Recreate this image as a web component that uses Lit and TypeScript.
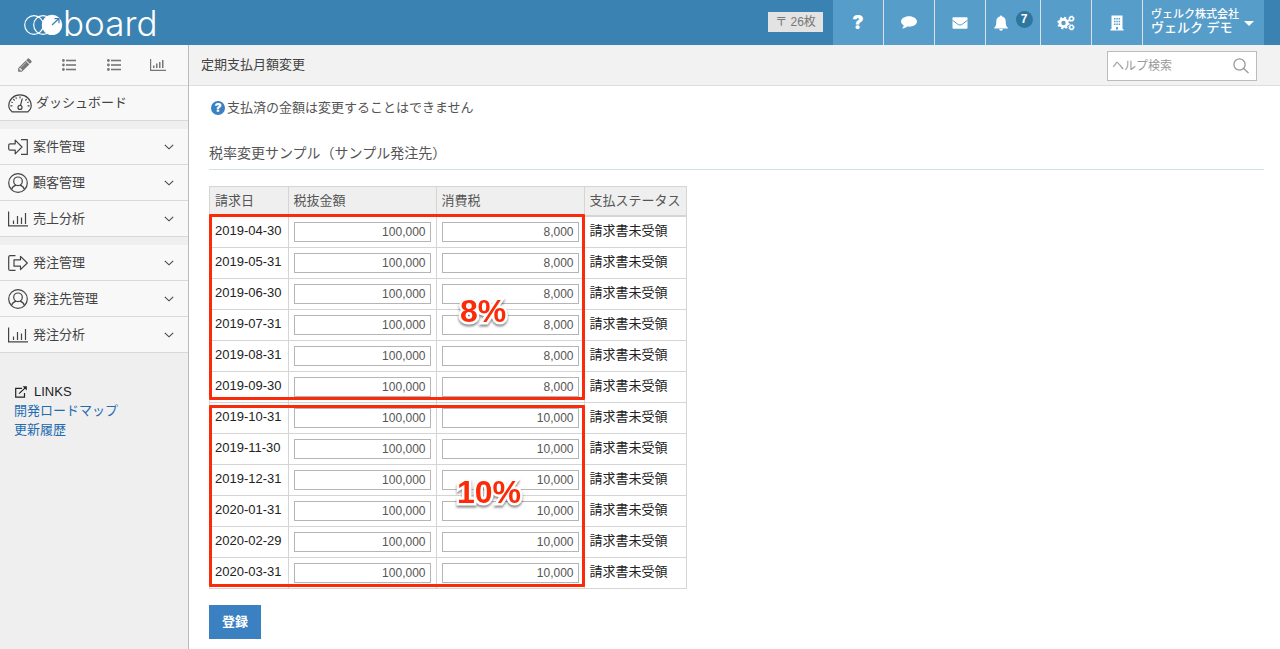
import { LitElement, html, css, svg } from "lit";
import { customElement, property, state } from "lit/decorators.js";

const pencil = svg`<svg viewBox="0 0 1792 1792" width="16" height="16" fill="currentColor" aria-hidden="true"><path d="M491 1536l91-91-235-235-91 91v107h128v128h107zM1014 608q0-22-22-22-10 0-17 7l-542 542q-7 7-7 17 0 22 22 22 10 0 17-7l542-542q7-7 7-17zM960 416l416 416-832 832h-416v-416zM1643 512q0 53-37 90l-166 166-416-416 166-165q36-38 90-38 53 0 91 38l235 234q37 39 37 91z"/></svg>`;

const list = () => svg`<svg viewBox="0 0 14 12" width="14" height="12" fill="currentColor" aria-hidden="true">
  <circle cx="1.4" cy="1.5" r="1.4"/><circle cx="1.4" cy="6" r="1.4"/><circle cx="1.4" cy="10.5" r="1.4"/>
  <rect x="4" y="0.7" width="10" height="1.6"/><rect x="4" y="5.2" width="10" height="1.6"/><rect x="4" y="9.7" width="10" height="1.6"/></svg>`;

const barSmall = svg`<svg viewBox="0 0 16 12" width="16" height="12" fill="currentColor" aria-hidden="true">
  <path d="M0 0h1.2v10.8H16V12H0zM3 6.5h1.5V9H3zM6 4.5h1.5V9H6zM9 3h1.5v6H9zM12 1h1.5v8H12z"/></svg>`;

const gauge = svg`<svg viewBox="0 0 24 19" width="24" height="19" fill="none" stroke="currentColor" stroke-width="1.2" stroke-linecap="round" aria-hidden="true">
  <path d="M4.2 17.9C2 16.3 .8 14 .8 11.6 .8 5.6 5.8 .9 12 .9s11.2 4.7 11.2 10.7c0 2.400-1.200 4.700-3.400 6.300z"/>
  <circle cx="12" cy="13.4" r="2"/><path d="M12.5 11.400l1.700-6.600"/>
  <path d="M12 2.800v1M5.600 5.400l.7.700M18.400 5.400l-.7.700M2.800 11.800h1.200M20 11.800h1.200M8 3.800l.3.500M3.800 8.300l.5.200M20.200 8.300l-.5.200"/></svg>`;

const arrowIn = svg`<svg viewBox="0 0 20 18" width="20" height="18" fill="none" stroke="currentColor" stroke-width="1.2" stroke-linejoin="round" aria-hidden="true">
  <path d="M2.200 5.800h5V2.200L14 9l-6.800 6.800v-3.600h-5Q.7 12.200 .7 10.700V7.300Q.7 5.800 2.200 5.800z"/><path d="M13 1.600h6.300v14.800H13"/></svg>`;

const arrowOut = svg`<svg viewBox="0 0 20 18" width="20" height="18" fill="none" stroke="currentColor" stroke-width="1.2" stroke-linejoin="round" aria-hidden="true">
  <path d="M6 5.800h6.500V2.400L19.300 9l-6.800 6.600v-3.400H6z"/><path d="M7.500 1.600H2.200Q.7 1.600 .7 3.100v11.800q0 1.500 1.500 1.500h5.300"/></svg>`;

const person = () => svg`<svg viewBox="0 0 20 20" width="20" height="20" fill="none" stroke="currentColor" stroke-width="1.2" aria-hidden="true">
  <circle cx="10" cy="10" r="9.3"/><circle cx="10" cy="8.300" r="4.300"/><path d="M3.600 16.400c.6-2.200 2.200-3.600 4.400-4.200M16.400 16.400c-.6-2.200-2.200-3.600-4.400-4.200"/></svg>`;

const bars = () => svg`<svg viewBox="0 0 20 16" width="20" height="16" fill="none" stroke="currentColor" stroke-width="1.2" aria-hidden="true">
  <path d="M.6 .5v14.400H20M5.500 13V9.500M9.500 13V5M13.500 13V6.500M17.500 13V2"/></svg>`;

const chevron = () => svg`<svg class="chevron" viewBox="0 0 10 6" width="10" height="6" fill="none" stroke="currentColor" stroke-width="1.1" aria-hidden="true"><path d="M.8 .8L5 4.800 9.200 .8"/></svg>`;

const external = svg`<svg viewBox="0 0 14 12" width="14" height="12" fill="none" stroke="currentColor" stroke-width="1.2" aria-hidden="true">
  <path d="M8 2.400H1.700v8.800h8.800V7M5 7.600l6.500-6"/><path d="M8.600 .3h4.200v4.200z" fill="currentColor" stroke="none"/></svg>`;

const comment = svg`<svg viewBox="0 0 16 13" width="16" height="13" fill="currentColor" aria-hidden="true"><path d="M8 .3c4.400 0 8 2.300 8 5.200s-3.600 5.200-8 5.200c-.6 0-1.100 0-1.700-.1-1.300 1.100-2.900 1.800-4.700 2-.4 0-.5-.4-.3-.6.8-.7 1.300-1.500 1.400-2.700C1 8.400 0 7 0 5.500 0 2.600 3.600 .3 8 .3z"/></svg>`;

const envelope = svg`<svg viewBox="0 0 16 12" width="16" height="12" aria-hidden="true"><rect x=".5" y=".3" width="15" height="11.4" rx="1" fill="currentColor"/><path d="M.5 3.300l5.700 4.200q1.800 1.300 3.600 0l5.700-4.200" fill="none" stroke="#579dca" stroke-width="1"/></svg>`;

const bell = svg`<svg viewBox="0 0 14 16" width="14" height="16" fill="currentColor" aria-hidden="true"><path d="M7 .5c.7 0 1 .5 1 1.100 2.500.5 3.700 2.400 3.700 4.800 0 3.400.6 5.100 2.100 6.400v.7H.2v-.7c1.500-1.300 2.100-3 2.100-6.400 0-2.400 1.200-4.300 3.700-4.800 0-.6.3-1.100 1-1.100zM5.200 14h3.600c0 1-.8 1.700-1.800 1.700S5.200 15 5.200 14z"/></svg>`;

const cogs = svg`<svg viewBox="0 0 18 16" width="18" height="16" fill="none" stroke="currentColor" aria-hidden="true">
  <circle cx="6.500" cy="8" r="3.600" stroke-width="2.800"/><circle cx="6.500" cy="8" r="5.200" stroke-width="2" stroke-dasharray="2.040 2.040"/>
  <circle cx="14.500" cy="3.700" r="1.900" stroke-width="1.400"/><circle cx="14.500" cy="3.700" r="2.700" stroke-width="1" stroke-dasharray="1.060 1.060"/>
  <circle cx="14.500" cy="12.300" r="1.900" stroke-width="1.400"/><circle cx="14.500" cy="12.300" r="2.700" stroke-width="1" stroke-dasharray="1.060 1.060"/></svg>`;

const building = svg`<svg viewBox="0 0 14 16" width="14" height="16" aria-hidden="true"><path d="M1.500 .5h11v13.500h1v1.500H.5V14h1z" fill="currentColor"/>
  <path d="M4 3h1.500v1.500H4zM6.300 3h1.500v1.500H6.300zM8.600 3h1.500v1.500H8.600zM4 5.800h1.500v1.500H4zM6.300 5.800h1.500v1.500H6.300zM8.600 5.800h1.500v1.500H8.600zM4 8.600h1.500v1.500H4zM6.300 8.600h1.500v1.500H6.300zM8.600 8.600h1.500v1.500H8.600zM6 12h2v2.500H6z" fill="#579dca"/></svg>`;

const magnifier = svg`<svg viewBox="0 0 16 16" width="16" height="16" fill="none" stroke="#999" stroke-width="1.3" aria-hidden="true"><circle cx="6.500" cy="6.500" r="5.600"/><path d="M10.600 10.600l4.900 4.500"/></svg>`;

const FONT = css`"Liberation Sans", "Noto Sans CJK JP", sans-serif`;

@customElement("board-header")
class BoardHeader extends LitElement {
  @property({ type: Number }) notices = 7;

  static styles = css`
    :host { display: block; font-family: ${FONT}; }
    .bar { display: flex; height: 45px; background: #3a82b1; padding-right: 16px; color: #fff; }
    a, button { color: #fff; text-decoration: none; }
    .logo { display: flex; align-items: center; padding-left: 23px; }
    .word { font: 300 35px/40px Inter, sans-serif; }
    .post { margin: 12px 10px auto auto; width: 55px; height: 20px; background: #e3e3e3; color: #777; font-size: 12px; line-height: 20px; text-align: center; }
    nav { display: flex; background: #579dca; }
    .cell { box-sizing: border-box; width: 51px; border-right: 1px solid #dbe3e8; display: flex; align-items: center; justify-content: center; }
    .bell { width: 55px; gap: 8px; }
    .badge { background: #2f769f; border-radius: 9px; width: 17px; height: 17px; margin-bottom: 6px; font-size: 12px; line-height: 17px; text-align: center; font-weight: bold; }
    .q { font: 900 19px/24px Inter, sans-serif; }
    .user { border: 0; background: none; padding: 0 10px 4px 8px; margin: 0; display: flex; align-items: center; gap: 5px; font-family: inherit; text-align: left; font-weight: 500; cursor: pointer; }
    .company { display: block; font-size: 11px; line-height: 14px; }
    .name { display: block; font-size: 13px; line-height: 14px; }
    .caret { border: 5px solid transparent; border-top-color: #fff; border-bottom: 0; margin-top: 6px; }
  `;

  render() {
    return html`
      <header class="bar">
        <a class="logo" href="#" aria-label="board">
          <svg viewBox="0 0 40 24" width="40" height="24" fill="none" stroke="#fff" stroke-width="1.2" aria-hidden="true">
            <circle cx="11" cy="14" r="9.300"/><circle cx="20" cy="14" r="9.300"/><circle cx="29" cy="14" r="9.600" fill="#fff"/>
            <path d="M29 14l6.500-6M31.500 7.700h4.500v4.500" stroke="#3a82b1"/>
          </svg><span class="word">board</span>
        </a>
        <div class="post">〒 26枚</div>
        <nav aria-label="メニュー">
          <a class="cell q" href="#">?</a>
          <a class="cell" href="#" aria-label="コメント">${comment}</a>
          <a class="cell" href="#" aria-label="メール">${envelope}</a>
          <a class="cell bell" href="#" aria-label="通知">${bell}<span class="badge">${this.notices}</span></a>
          <a class="cell" href="#" aria-label="設定">${cogs}</a>
          <a class="cell" href="#" aria-label="会社">${building}</a>
          <button class="user" type="button">
            <span><span class="company">ヴェルク株式会社</span><span class="name">ヴェルク デモ</span></span>
            <span class="caret"></span>
          </button>
        </nav>
      </header>`;
  }
}

@customElement("board-sidebar")
class BoardSidebar extends LitElement {
  private groups = [
    [
      { label: "案件管理", icon: arrowIn },
      { label: "顧客管理", icon: person() },
      { label: "売上分析", icon: bars() },
    ],
    [
      { label: "発注管理", icon: arrowOut },
      { label: "発注先管理", icon: person() },
      { label: "発注分析", icon: bars() },
    ],
  ];

  static styles = css`
    :host { display: block; background: #efefef; border-right: 1px solid #bbb; font: 13px/18px ${FONT}; color: #444; }
    a { color: inherit; text-decoration: none; }
    .tools { display: grid; grid-template-columns: repeat(4, 1fr); height: 40px; padding: 0 8px 0 3px; background: #f8f8f8; border-bottom: 1px solid #d9d9d9; color: #777; }
    .tools a { display: flex; align-items: center; justify-content: center; }
    .row { box-sizing: border-box; width: 100%; height: 36px; display: flex; align-items: center; gap: 5px; padding: 0 14px 0 8px; background: #f8f8f8; border: 0; border-bottom: 1px solid #d9d9d9; font: inherit; color: inherit; text-align: left; cursor: pointer; }
    .dash { height: 35px; gap: 4px; }
    .group { margin-top: 8px; }
    .chevron { margin-left: auto; }
    .links { padding: 29px 14px; line-height: 19px; }
    .head { display: flex; align-items: center; gap: 6px; color: #222; }
    .links a { display: block; color: #1f6cb0; }
  `;

  render() {
    return html`
      <div class="tools">
        <a href="#" aria-label="作成">${pencil}</a>
        <a href="#" aria-label="案件一覧">${list()}</a>
        <a href="#" aria-label="発注一覧">${list()}</a>
        <a href="#" aria-label="分析">${barSmall}</a>
      </div>
      <a class="row dash" href="#">${gauge}<span>ダッシュボード</span></a>
      ${this.groups.map(
        (g) => html`<div class="group">
          ${g.map((i) => html`<button class="row" type="button">${i.icon}<span>${i.label}</span>${chevron()}</button>`)}
        </div>`
      )}
      <div class="links">
        <div class="head">${external}<span>LINKS</span></div>
        <a href="#">開発ロードマップ</a>
        <a href="#">更新履歴</a>
      </div>`;
  }
}

@customElement("payment-table")
class PaymentTable extends LitElement {
  @state() private rows = [
    "2019-04-30", "2019-05-31", "2019-06-30", "2019-07-31", "2019-08-31", "2019-09-30",
    "2019-10-31", "2019-11-30", "2019-12-31", "2020-01-31", "2020-02-29", "2020-03-31",
  ].map((date, i) => ({ date, amount: "100,000", tax: i < 6 ? "8,000" : "10,000" }));

  static styles = css`
    :host { display: block; position: relative; width: max-content; font: 13px/18px ${FONT}; color: #222; }
    table { border-collapse: collapse; }
    th, td { border: 1px solid #d5d5d5; padding: 5px; vertical-align: top; text-align: left; white-space: nowrap; }
    th { background: #efefef; color: #555; font-weight: normal; border-bottom-width: 2px; }
    tbody td { height: 20px; }
    td.date { padding-right: 6px; }
    input { display: block; box-sizing: border-box; width: 137px; height: 20px; margin: 0; padding: 0 4px; border: 1px solid #b5b5b5; border-radius: 0; background: #fff; text-align: right; font: 12px/18px ${FONT}; color: #555; }
    .mark { position: absolute; box-sizing: border-box; left: 0; right: 102px; border: 3px solid #fb2a08; border-radius: 1px; pointer-events: none; }
    .mark.low { top: 28px; height: 186px; }
    .mark.high { top: 219px; height: 182px; }
    .rate { position: absolute; font: bold 32px/36px "Liberation Sans", sans-serif; color: #fb2a08; -webkit-text-stroke: 5px #fff; paint-order: stroke fill; filter: drop-shadow(0 2px 1px rgba(0, 0, 0, 0.45)); }
    .low .rate { left: 248px; top: 76px; }
    .high .rate { left: 245px; top: 66px; }
  `;

  render() {
    return html`
      <table>
        <thead><tr><th>請求日</th><th>税抜金額</th><th>消費税</th><th>支払ステータス</th></tr></thead>
        <tbody>
          ${this.rows.map(
            (r) => html`<tr>
              <td class="date">${r.date}</td>
              <td><input type="text" aria-label="${r.date} 税抜金額" .value=${r.amount}></td>
              <td><input type="text" aria-label="${r.date} 消費税" .value=${r.tax}></td>
              <td>請求書未受領</td>
            </tr>`
          )}
        </tbody>
      </table>
      <div class="mark low"><span class="rate">8%</span></div>
      <div class="mark high"><span class="rate">10%</span></div>`;
  }
}

@customElement("app-root")
class AppRoot extends LitElement {
  static styles = css`
    :host { display: flex; flex-direction: column; min-height: 100vh; background: #fff; font: 13px/18px ${FONT}; color: #555; }
    .page { flex: 1; display: grid; grid-template-columns: 189px 1fr; }
    .bar { display: flex; align-items: center; justify-content: space-between; height: 40px; padding: 0 23px 0 12px; background: #f2f2f2; border-bottom: 1px solid #ddd; }
    h1 { margin: 0; font-size: 13px; line-height: 18px; font-weight: normal; color: #444; }
    .search { box-sizing: border-box; width: 150px; height: 30px; display: flex; align-items: center; padding: 0 7px 0 4px; background: #fff; border: 1px solid #bbb; margin-top: 2px; }
    .search input { flex: 1; min-width: 0; border: 0; padding: 0; outline: 0; background: none; font: 12px/18px ${FONT}; }
    .search input::placeholder { color: #999; }
    .search button { display: flex; padding: 0; border: 0; background: none; }
    .content { padding: 13px 16px 10px 20px; }
    .hint { display: flex; align-items: center; gap: 2px; margin: 0 0 27px 2px; }
    .mark { width: 14px; height: 14px; border-radius: 7px; background: #3b80c0; color: #fff; font: 900 12px/14px Inter, sans-serif; text-align: center; }
    h2 { margin: 0 0 16px; padding-bottom: 7px; border-bottom: 1px solid #d3dfe7; font-size: 14px; line-height: 18px; font-weight: normal; color: #555; }
    .submit { display: block; margin-top: 16px; width: 52px; height: 34px; padding: 0; border: 0; background: #3b80c0; color: #fff; font: bold 13px/18px ${FONT}; }
  `;

  render() {
    return html`
      <board-header></board-header>
      <div class="page">
        <board-sidebar></board-sidebar>
        <main>
          <div class="bar">
            <h1>定期支払月額変更</h1>
            <form class="search" @submit=${(e: Event) => e.preventDefault()}>
              <input type="text" placeholder="ヘルプ検索" aria-label="ヘルプ検索">
              <button type="submit" aria-label="検索">${magnifier}</button>
            </form>
          </div>
          <div class="content">
            <p class="hint"><span class="mark">?</span><span>支払済の金額は変更することはできません</span></p>
            <h2>税率変更サンプル（サンプル発注先）</h2>
            <payment-table></payment-table>
            <button class="submit" type="button">登録</button>
          </div>
        </main>
      </div>`;
  }
}
